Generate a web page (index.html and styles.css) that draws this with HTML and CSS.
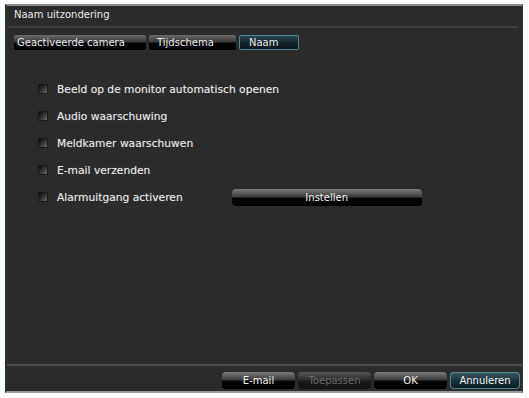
FILE: index.html
```html
<!DOCTYPE html>
<html lang="en">
<head>
    <meta charset="UTF-8">
    <title>Naam uitzondering</title>
    <link rel="stylesheet" href="styles.css">
</head>
<body>
    <div class="dialog">
        <div class="title">Naam uitzondering</div>

        <div class="tabs">
            <div class="tab">Geactiveerde camera</div>
            <div class="tab">Tijdschema</div>
            <div class="tab active">Naam</div>
        </div>

        <div class="content">
            <label class="row"><span class="check"></span>Beeld op de monitor automatisch openen</label>
            <label class="row"><span class="check"></span>Audio waarschuwing</label>
            <label class="row"><span class="check"></span>Meldkamer waarschuwen</label>
            <label class="row"><span class="check"></span>E-mail verzenden</label>
            <div class="row">
                <label class="row-label"><span class="check"></span>Alarmuitgang activeren</label>
                <button class="button wide">Instellen</button>
            </div>
        </div>

        <div class="footer">
            <button class="button">E-mail</button>
            <button class="button disabled">Toepassen</button>
            <button class="button">OK</button>
            <button class="button active">Annuleren</button>
        </div>
    </div>
</body>
</html>
```

FILE: styles.css
```css
html, body {
    margin: 0;
    padding: 0;
    background: #ffffff;
}
body {
    font-family: "DejaVu Sans", Verdana, sans-serif;
    font-size: 10px;
    color: #e8e8e8;
    padding: 4px 6px 5px 5px;
    height: 398px;
    box-sizing: border-box;
}
.dialog {
    height: 100%;
    box-sizing: border-box;
    background: #2b2b2b;
    border-top: 2px solid #8a8a8a;
    border-left: 2px solid #1d3a1f;
    border-right: 1px solid #3a3a3a;
    border-bottom: 2px solid #9a9a9a;
    display: flex;
    flex-direction: column;
}
.title {
    padding: 3px 0 0 7px;
    height: 17px;
    border-bottom: 2px solid #3e3e3e;
    margin-right: 4px;
}
.tabs {
    display: flex;
    gap: 3px;
    padding: 7px 0 0 7px;
}
.tab {
    height: 15px;
    line-height: 15px;
    padding: 0 4px 0 3px;
    border-radius: 2px;
    background: linear-gradient(#6a6a6a, #3a3a3a 45%, #050505 55%, #000);
}
.tab:nth-child(1) { width: 125px; }
.tab:nth-child(2) { width: 75px; padding-left: 8px; }
.tab.active {
    width: 46px;
    padding-left: 10px;
    background: linear-gradient(#2e4f58, #14262c 50%, #0a1418);
    box-shadow: 0 0 0 1px #3f8a96 inset;
}
.content {
    flex: 1;
    display: flex;
    flex-direction: column;
    gap: 13px;
    padding: 32px 0 0 32px;
    border-bottom: 2px solid #4a4a4a;
    margin-bottom: 6px;
    font-size: 10.7px;
    text-shadow: 0 0 1px rgba(255, 255, 255, 0.35);
}
.row, .row-label {
    display: flex;
    align-items: center;
    height: 14px;
}
.check {
    width: 8px;
    height: 8px;
    margin-right: 10px;
    background: linear-gradient(135deg, #0c0c0c, #3a3a3a 60%, #6a6a6a);
    box-shadow: 0 0 0 1px #1a1a1a;
}
.button {
    font: inherit;
    color: #f2f2f2;
    border: none;
    border-radius: 4px;
    height: 17px;
    width: 73px;
    padding: 0;
    background: linear-gradient(#7a7a7a, #3c3c3c 45%, #060606 55%, #000);
}
.button.wide {
    width: 190px;
    margin-left: 49px;
    font-size: 10px;
}
.button.disabled {
    color: #6a6a6a;
    background: linear-gradient(#555, #2e2e2e 45%, #1a1a1a 55%, #111);
}
.button.active {
    width: 70px;
    background: linear-gradient(#3e5e68, #1a3038 50%, #0c1a1e);
    box-shadow: 0 0 0 1px #4f8892 inset;
}
.footer {
    display: flex;
    justify-content: flex-end;
    gap: 3px;
    padding: 0 2px 2px 0;
}
```
